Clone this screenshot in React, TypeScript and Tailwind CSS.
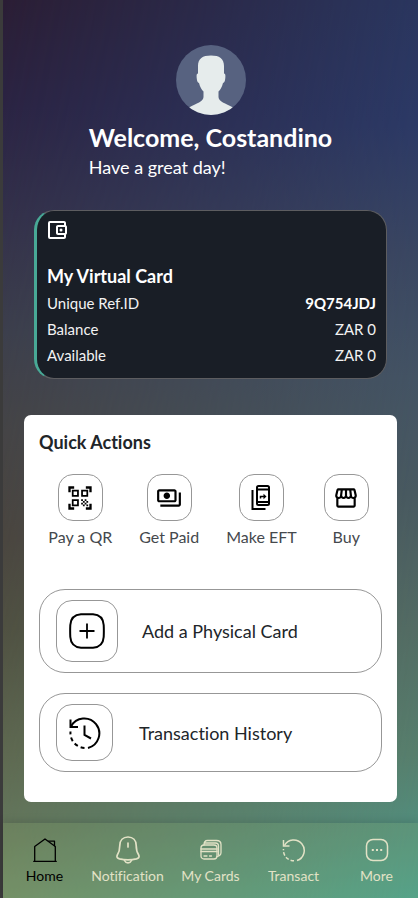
import type { ReactNode } from "react";
import {
  MdOutlineAccountBalanceWallet,
  MdOutlinePayments,
  MdOutlineStorefront,
  MdQrCodeScanner,
} from "react-icons/md";

function Avatar() {
  return (
    <svg viewBox="0 0 70 70" className="size-[70px]" role="img" aria-label="Profile picture">
      <defs>
        <clipPath id="avatar-disc">
          <circle cx="35" cy="35" r="35" />
        </clipPath>
      </defs>
      <circle cx="35" cy="35" r="35" fill="#576280" />
      <path
        clipPath="url(#avatar-disc)"
        fill="#e6ecec"
        d="M35 10.500c8.500 0 13 3 13 10.500v7.500c1.500.3 1.500 1.800 1.300 4.500-.3 3-.8 4.500-2.300 5-1 4-2.500 6.500-4.500 8.500v5.500c0 4.500 7 6.500 14.500 10.500V72H13V62.500C20.500 58.500 27.500 56.500 27.500 52v-5.500c-2-2-3.500-4.500-4.500-8.500-1.500-.5-2-2-2.300-5-.2-2.700-.2-4.200 1.300-4.500V21c0-7.500 4.500-10.500 13-10.500z"
      />
    </svg>
  );
}

function TransferIcon() {
  return (
    <svg viewBox="0 0 24 28" className="h-7 w-6" fill="none" stroke="currentColor" strokeWidth="2">
      <rect x="8" y="2" width="12" height="19" rx="1.500" />
      <path d="M8 5.500h12M8 18h12" />
      <path d="M3.500 6v19h13" />
      <path d="M11.500 14.500v-2h4" strokeWidth="1.500" />
      <path d="M14.500 9.700l3 2.800-3 2.800z" fill="currentColor" stroke="none" />
    </svg>
  );
}

function PlusBoxIcon() {
  return (
    <svg viewBox="0 0 36 36" className="size-9" fill="none" stroke="currentColor" strokeWidth="2">
      <path d="M12 1.300Q18 1 24 1.300Q34 2 34.700 12Q35 18 34.700 24Q34 34 24 34.700Q18 35 12 34.700Q2 34 1.300 24Q1 18 1.300 12Q2 2 12 1.300z" />
      <path d="M18 10.500v15M10.500 18h15" strokeWidth="1.800" />
    </svg>
  );
}

function HistoryIcon() {
  return (
    <svg viewBox="0 0 32 32" className="size-8" fill="none" stroke="currentColor" strokeWidth="2">
      <path d="M2 9.500A15 15 0 1 1 19 31" />
      <path d="M1.500 2.500v7.500h7.500" />
      <path d="M15.500 31A15 15 0 0 1 1.500 14.500" strokeDasharray="4 3" />
      <path d="M15.500 8.500V18l6.500 3.500" />
    </svg>
  );
}

function HomeIcon() {
  return (
    <svg viewBox="0 0 24 24" className="size-6" fill="none" stroke="currentColor" strokeWidth="1.300" strokeLinejoin="round" strokeLinecap="round">
      <path d="M.7 23.300h22.600M1.700 23V8.500L12 1l10.300 7.500V23" />
      <path d="M15.500 3.200h6v4.600" />
    </svg>
  );
}

function BellIcon() {
  return (
    <svg viewBox="0 0 26 30" className="h-[30px] w-[26px]" fill="none" stroke="currentColor" strokeWidth="1.700" strokeLinejoin="round" strokeLinecap="round">
      <path d="M13 2c-5 0-8.200 3.500-8.200 8.500 0 5.500-.8 7-2.500 9.500-1 2 0 3.300 2.200 3.900 6 1.300 11 1.300 17 0 2.200-.6 3.200-1.900 2.200-3.900-1.700-2.500-2.500-4-2.500-9.500 0-5-3.200-8.500-8.200-8.500z" />
      <path d="M9.500 25.500c1.500 3.200 5.500 3.200 7 0M13 8v4" />
    </svg>
  );
}

function CardsIcon() {
  return (
    <svg viewBox="0 0 24 22" className="h-[22px] w-6" fill="none" stroke="currentColor" strokeWidth="1.300" strokeLinejoin="round" strokeLinecap="round">
      <rect x="2" y="6" width="16" height="14" rx="3" />
      <path d="M2 10h16M2 12.500h16M5 17h3M10.500 17h2" />
      <path d="M5 6c0-3 1-4.500 3.500-4.500h9c3 0 4.500 1.500 4.500 4v8c0 2.500-1 3.500-4 4M6 4h10.500c2 0 3 1 3 3v9" />
    </svg>
  );
}

function TransactIcon() {
  return (
    <svg viewBox="0 0 24 24" className="size-6" fill="none" stroke="currentColor" strokeWidth="1.500">
      <path d="M2.500 7.500A10.500 10.500 0 1 1 15 22.500" />
      <path d="M1.500 2v6h6" />
      <path d="M12 22.800A10.500 10.500 0 0 1 1.500 11" strokeDasharray="3.500 2" />
    </svg>
  );
}

function MoreIcon() {
  return (
    <svg viewBox="0 0 24 24" className="size-6" fill="none" stroke="currentColor" strokeWidth="1.500">
      <rect x="1.500" y="1.500" width="21" height="21" rx="6.500" />
      <path d="M6.800 12h2M11 12h2M15.200 12h2" strokeWidth="2" />
    </svg>
  );
}

function QuickAction({ icon, label }: { icon: ReactNode; label: string }) {
  return (
    <button type="button" className="flex flex-col items-center gap-1.5 text-[#45494d]">
      <span className="flex h-[47px] w-[45px] items-center justify-center rounded-[15px] border border-[#979797] text-black">
        {icon}
      </span>
      <span className="text-base leading-5 whitespace-nowrap">{label}</span>
    </button>
  );
}

function NavItem({ icon, label, active = false }: { icon: ReactNode; label: string; active?: boolean }) {
  return (
    <a
      href="#"
      aria-current={active ? "page" : undefined}
      className={`flex flex-1 flex-col items-center ${active ? "text-black" : "text-[#e2e2c6]"}`}
    >
      <span className="flex h-8 items-center">{icon}</span>
      <span className="text-sm leading-5 whitespace-nowrap">{label}</span>
    </a>
  );
}

const details = [
  { name: "Balance", value: "ZAR 0" },
  { name: "Available", value: "ZAR 0" },
];

export default function App() {
  return (
    <div className="relative isolate flex min-h-screen flex-col border-l-3 border-[#3b3b3b] font-['Lato',sans-serif] [font-variant-ligatures:none]">
      <div className="absolute inset-0 -z-20 bg-[linear-gradient(to_bottom,#2b1e35_0%,#2b2342_12%,#332f48_24%,#3c3d49_37%,#454141_48%,#4a4038_60%,#4f4a39_70%,#616248_84%,#6a6e50_92%,#7d8258_100%)]" />
      <div className="absolute inset-0 -z-10 bg-[linear-gradient(to_bottom,#2a3f6e_0%,#2c4070_14%,#3b4b68_28%,#44576a_42%,#485d66_55%,#536f68_70%,#56806f_84%,#519080_93%,#4a9f8e_100%)] [mask-image:linear-gradient(100deg,transparent_0%,rgba(0,0,0,0.5)_50%,black_100%)]" />

      <header className="flex flex-col items-center pt-[45px]">
        <Avatar />
        <div className="mt-1.5 text-white">
          <h1 className="text-[25px] leading-8 font-bold">Welcome, Costandino</h1>
          <p className="mt-0.5 text-lg leading-6">Have a great day!</p>
        </div>
      </header>

      <main className="flex flex-1 flex-col px-[21px] pb-[21px]">
        <section className="mx-2.5 mt-[31px] rounded-[20px] border border-l-3 border-[#5d5d60] border-l-[#48a996] bg-[#191e26] px-2.5 pt-[7px] pb-2.5 text-[15px] text-[#f2f2f2]">
          <MdOutlineAccountBalanceWallet className="-ml-0.5 size-6 text-white" />
          <h2 className="mt-5 text-lg leading-7 font-bold text-white">My Virtual Card</h2>
          <dl>
            <div className="flex justify-between leading-[26px]">
              <dt>Unique Ref.ID</dt>
              <dd className="font-bold text-white">9Q754JDJ</dd>
            </div>
            {details.map((row) => (
              <div key={row.name} className="flex justify-between leading-[26px]">
                <dt>{row.name}</dt>
                <dd>{row.value}</dd>
              </div>
            ))}
          </dl>
        </section>

        <section className="mt-9 flex flex-1 flex-col rounded-[7px] bg-white px-[15px] pt-[15px] pb-[30px]">
          <h2 className="text-lg leading-6 font-bold text-[#212529]">Quick Actions</h2>
          <div className="mt-5 flex justify-center gap-[27px] pr-1">
            <QuickAction icon={<MdQrCodeScanner className="size-7" />} label="Pay a QR" />
            <QuickAction icon={<MdOutlinePayments className="size-[26px]" />} label="Get Paid" />
            <QuickAction icon={<TransferIcon />} label="Make EFT" />
            <QuickAction icon={<MdOutlineStorefront className="size-[26px]" />} label="Buy" />
          </div>
          <button
            type="button"
            className="mt-[42px] flex items-center gap-6 rounded-[26px] border border-[#979797] px-4 py-2.5 text-lg text-[#212529]"
          >
            <span className="flex size-[62px] items-center justify-center rounded-2xl border border-[#979797] text-black">
              <PlusBoxIcon />
            </span>
            Add a Physical Card
          </button>
          <button
            type="button"
            className="mt-5 flex items-center gap-[26px] rounded-[26px] border border-[#979797] px-4 py-2.5 text-lg text-[#212529]"
          >
            <span className="flex size-[57px] items-center justify-center rounded-2xl border border-[#979797] text-black">
              <HistoryIcon />
            </span>
            Transaction History
          </button>
        </section>
      </main>

      <nav className="flex bg-[#9dbb6c]/15 pt-[11px] pb-3 shadow-[0_-2px_8px_rgba(0,0,0,0.12)]">
        <NavItem icon={<HomeIcon />} label="Home" active />
        <NavItem icon={<BellIcon />} label="Notification" />
        <NavItem icon={<CardsIcon />} label="My Cards" />
        <NavItem icon={<TransactIcon />} label="Transact" />
        <NavItem icon={<MoreIcon />} label="More" />
      </nav>
    </div>
  );
}
